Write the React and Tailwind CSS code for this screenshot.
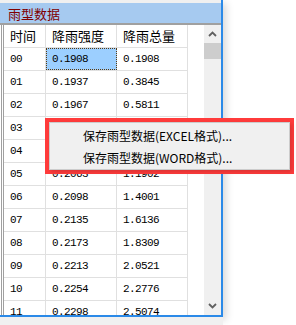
import React from 'react';

const rows = [
  ['00', '0.1908', '0.1908'],
  ['01', '0.1937', '0.3845'],
  ['02', '0.1967', '0.5811'],
  ['03', '0.1998', '0.7809'],
  ['04', '0.2030', '0.9839'],
  ['05', '0.2063', '1.1902'],
  ['06', '0.2098', '1.4001'],
  ['07', '0.2135', '1.6136'],
  ['08', '0.2173', '1.8309'],
  ['09', '0.2213', '2.0521'],
  ['10', '0.2254', '2.2776'],
  ['11', '0.2298', '2.5074'],
];

const cjk = { fontFamily: '"Noto Sans CJK SC", "Noto Sans", sans-serif' };
const mono = { fontFamily: '"Liberation Mono", "DejaVu Sans Mono", monospace' };

function Chevron({ down }) {
  return (
    <svg width="9" height="6" viewBox="0 0 9 6">
      <path
        d={down ? 'M1 1 L4.5 4.5 L8 1' : 'M1 5 L4.5 1.5 L8 5'}
        fill="none"
        stroke="#606060"
        strokeWidth="1.8"
      />
    </svg>
  );
}

function App() {
  return (
    <div className="relative w-[296px] h-[325px] bg-white overflow-hidden" style={cjk}>
      <div className="w-[223px]">
        {/* panel window */}
        <div className="h-[317px] border-r-2 border-b-2 border-[#2b8ae8] bg-white flex flex-col shadow-[3px_3px_8px_rgba(0,0,0,0.16)]">
          <div className="h-[3px] bg-[#f0f0f0]" />
          <div className="h-[20px] bg-[#a6caf0] pl-[8px] flex items-center text-[13px] leading-none text-[#800000]">
            雨型数据
          </div>
          <div className="h-[2px] bg-[#a0a0a0]" />
          <div className="flex flex-1 overflow-hidden">
            {/* double left edge */}
            <div className="w-[4px] flex">
              <div className="w-px bg-white" />
              <div className="w-px bg-[#a0a0a0]" />
              <div className="w-px bg-white" />
              <div className="w-px bg-[#a0a0a0]" />
            </div>
            {/* grid */}
            <div className="w-[184px] overflow-hidden">
              <div className="flex h-[23px] border-b border-[#e0e0e0] text-[13px] text-black">
                <div className="w-[42px] pl-[6px] border-r border-[#e0e0e0] flex items-center">时间</div>
                <div className="w-[71px] pl-[6px] border-r border-[#e0e0e0] flex items-center">降雨强度</div>
                <div className="w-[71px] pl-[6px] border-r border-[#e0e0e0] flex items-center">降雨总量</div>
              </div>
              {rows.map((r, i) => (
                <div
                  key={r[0]}
                  className="flex h-[23px] border-b border-[#e0e0e0] text-[11px] tracking-[-0.6px] text-black"
                  style={mono}
                >
                  <div className="w-[42px] pl-[6px] border-r border-[#e0e0e0] flex items-center">{r[0]}</div>
                  <div
                    className={
                      i === 0
                        ? 'w-[71px] pl-[5px] border border-dotted border-[#5a3a10] bg-[#9ccfff] flex items-center'
                        : 'w-[71px] pl-[6px] border-r border-[#e0e0e0] flex items-center'
                    }
                  >
                    {r[1]}
                  </div>
                  <div className="w-[71px] pl-[6px] border-r border-[#e0e0e0] flex items-center">{r[2]}</div>
                </div>
              ))}
            </div>
            <div className="w-[16px]" />
            {/* scrollbar */}
            <div className="w-[17px] bg-[#f0f0f0] flex flex-col">
              <div className="h-[18px] flex items-center justify-center">
                <Chevron />
              </div>
              <div className="h-[16px] bg-[#cdcdcd]" />
              <div className="flex-1" />
              <div className="h-[18px] flex items-center justify-center">
                <Chevron down />
              </div>
            </div>
          </div>
        </div>
        <div className="h-[8px] bg-[#f0f0f0]" />
      </div>

      {/* context menu, highlighted */}
      <div className="absolute left-[45px] top-[118px] w-[249px] h-[56px] border-4 border-[#ff3b3b]">
        <div className="h-full bg-[#f0f0f0] border border-[#cccccc] pt-[2px] text-[12px] text-black shadow-[2px_2px_4px_rgba(0,0,0,0.15)]">
          <div className="h-[22px] pl-[33px] flex items-center">保存雨型数据(EXCEL格式)...</div>
          <div className="h-[22px] pl-[33px] flex items-center">保存雨型数据(WORD格式)...</div>
        </div>
      </div>
    </div>
  );
}

export default App;
